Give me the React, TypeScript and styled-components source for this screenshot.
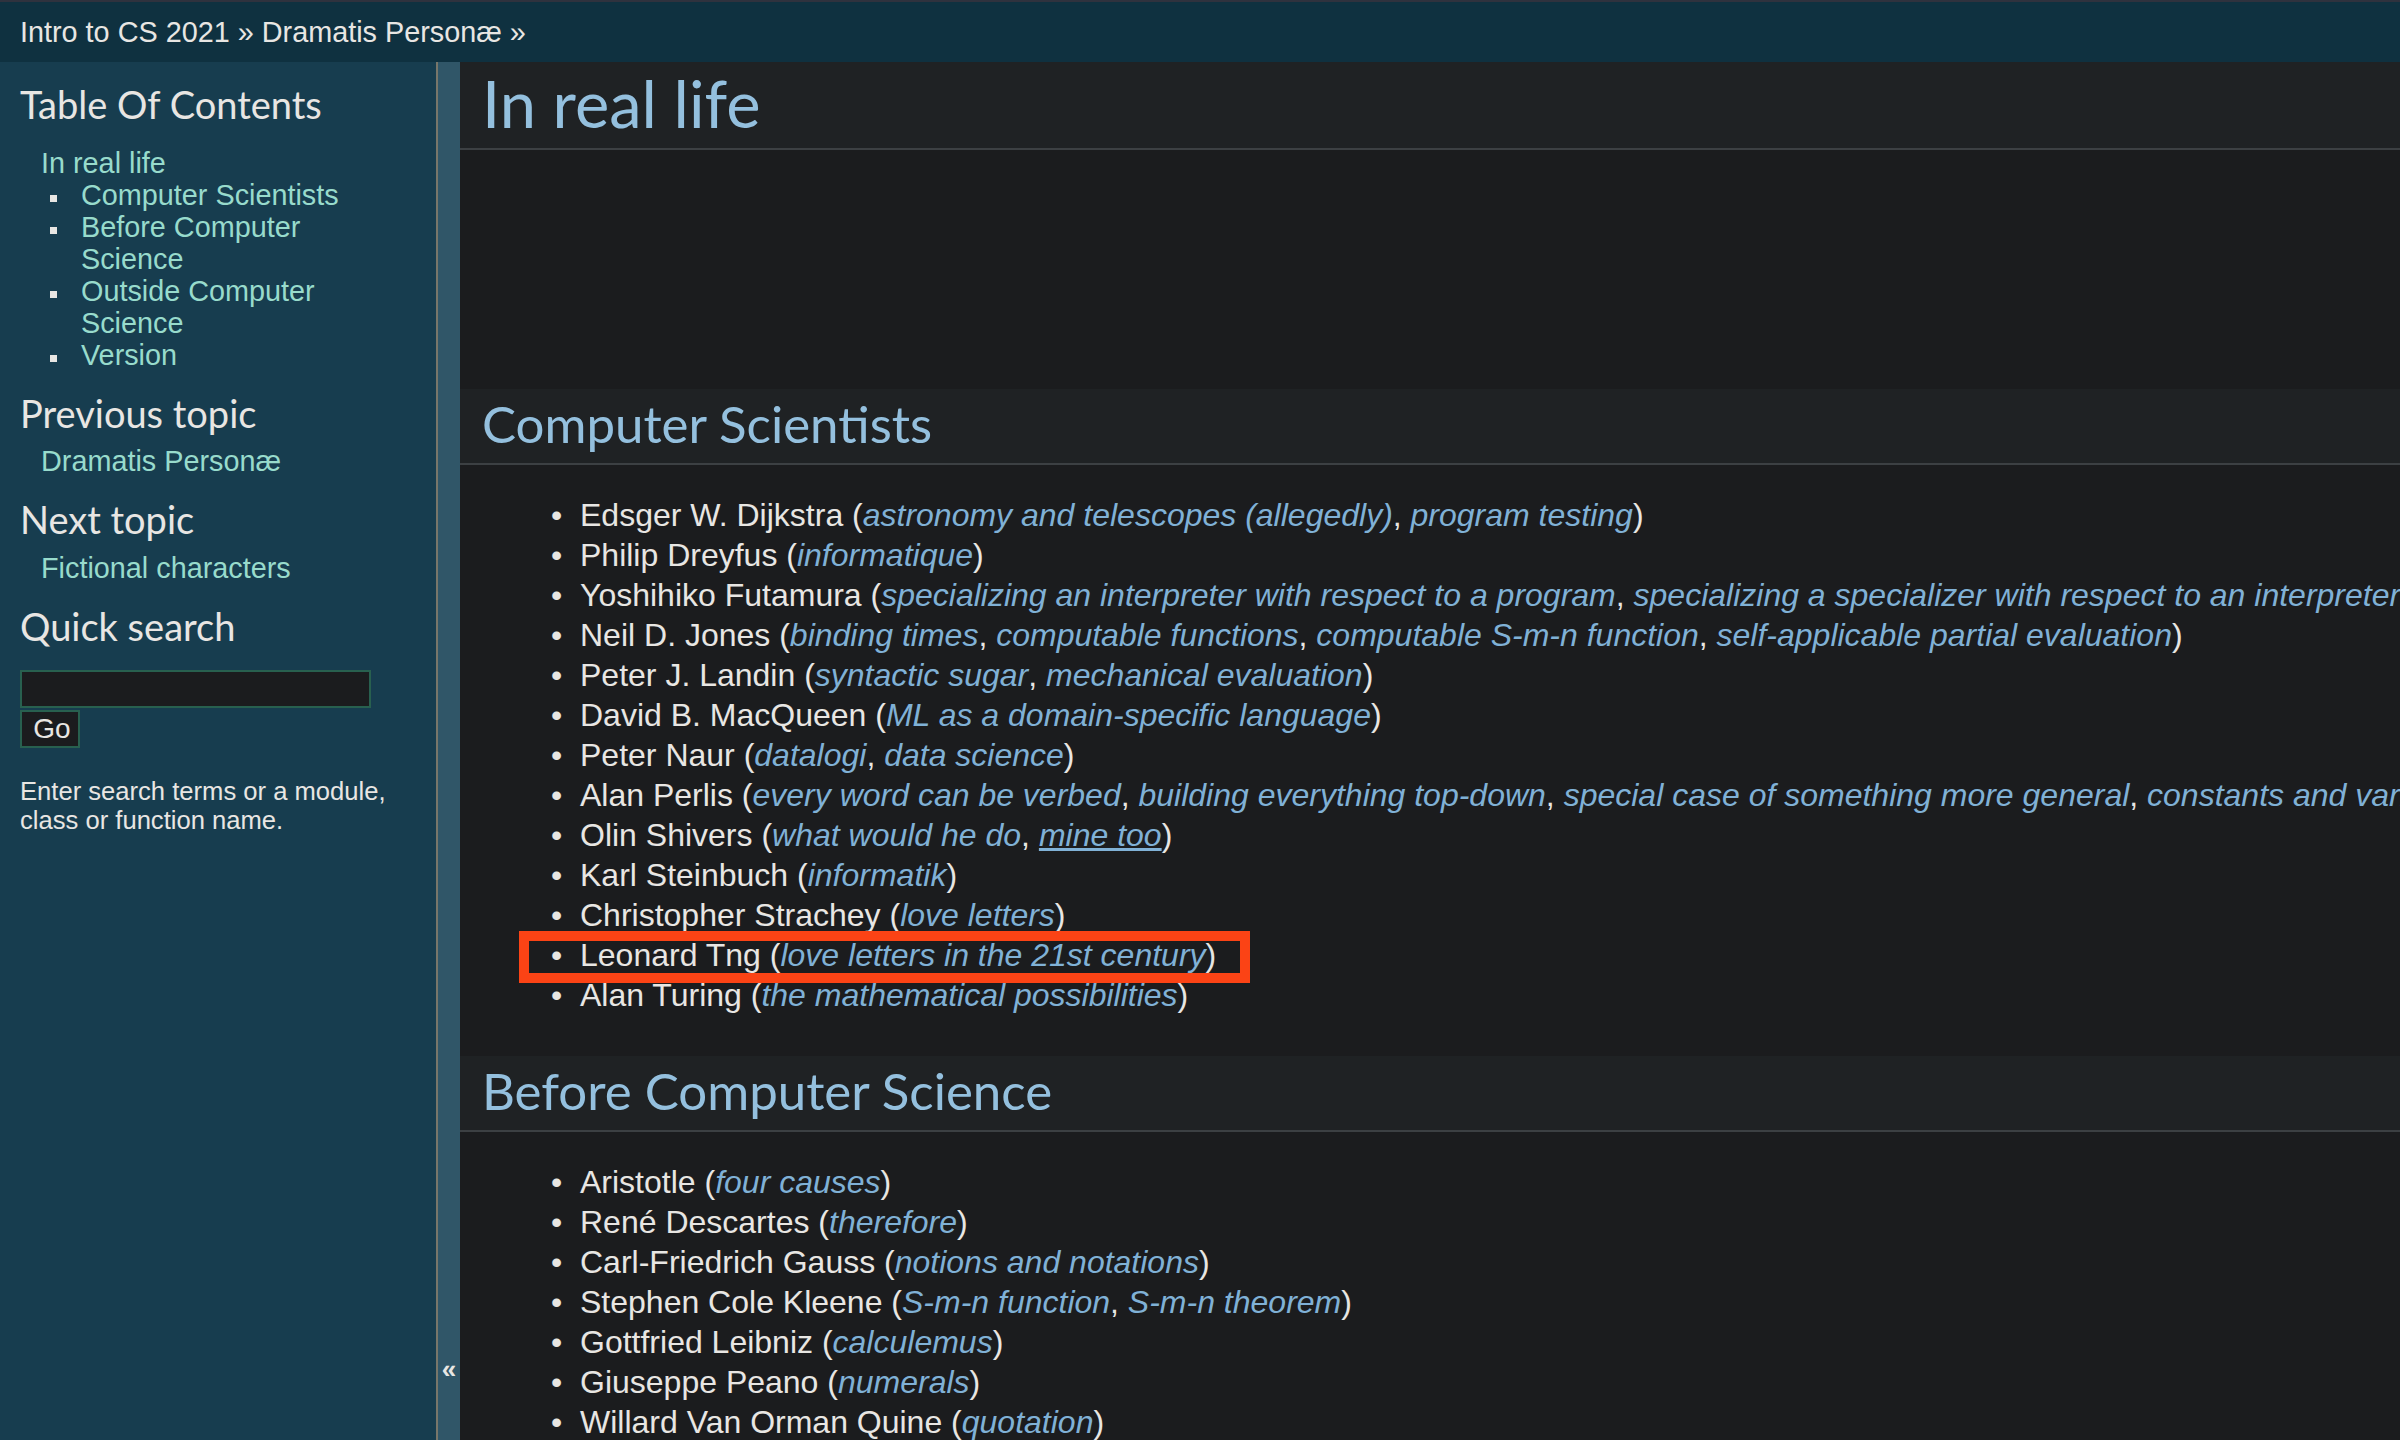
import React from "react";
import styled, { createGlobalStyle } from "styled-components";

interface Person {
  name: string;
  refs: string[];
  hovered?: string;
  marked?: boolean;
}

const scientists: Person[] = [
  { name: "Edsger W. Dijkstra", refs: ["astronomy and telescopes (allegedly)", "program testing"] },
  { name: "Philip Dreyfus", refs: ["informatique"] },
  {
    name: "Yoshihiko Futamura",
    refs: [
      "specializing an interpreter with respect to a program",
      "specializing a specializer with respect to an interpreter",
      "specializing a specializer with respect to itself",
    ],
  },
  {
    name: "Neil D. Jones",
    refs: ["binding times", "computable functions", "computable S-m-n function", "self-applicable partial evaluation"],
  },
  { name: "Peter J. Landin", refs: ["syntactic sugar", "mechanical evaluation"] },
  { name: "David B. MacQueen", refs: ["ML as a domain-specific language"] },
  { name: "Peter Naur", refs: ["datalogi", "data science"] },
  {
    name: "Alan Perlis",
    refs: [
      "every word can be verbed",
      "building everything top-down",
      "special case of something more general",
      "constants and variables",
    ],
  },
  { name: "Olin Shivers", refs: ["what would he do", "mine too"], hovered: "mine too" },
  { name: "Karl Steinbuch", refs: ["informatik"] },
  { name: "Christopher Strachey", refs: ["love letters"] },
  { name: "Leonard Tng", refs: ["love letters in the 21st century"], marked: true },
  { name: "Alan Turing", refs: ["the mathematical possibilities"] },
];

const predecessors: Person[] = [
  { name: "Aristotle", refs: ["four causes"] },
  { name: "René Descartes", refs: ["therefore"] },
  { name: "Carl-Friedrich Gauss", refs: ["notions and notations"] },
  { name: "Stephen Cole Kleene", refs: ["S-m-n function", "S-m-n theorem"] },
  { name: "Gottfried Leibniz", refs: ["calculemus"] },
  { name: "Giuseppe Peano", refs: ["numerals"] },
  { name: "Willard Van Orman Quine", refs: ["quotation"] },
];

const tocChildren = ["Computer Scientists", "Before Computer Science", "Outside Computer Science", "Version"];

const GlobalStyle = createGlobalStyle`
  html, body {
    margin: 0;
    height: 100%;
    overflow: hidden;
    background: #1b1c1e;
  }
  body {
    font-family: "Liberation Sans", Arial, sans-serif;
    color: #e8e6e3;
  }
`;

const Page = styled.div`
  display: flex;
  flex-direction: column;
  height: 100vh;
`;

const Related = styled.div`
  display: flex;
  align-items: center;
  height: 60px;
  border-top: 2px solid #2f323e;
  background: #0f3140;
  padding-left: 20px;
  font-size: 28.8px;
  white-space: nowrap;

  a {
    color: #e8e6e3;
    text-decoration: none;
  }
`;

const Body = styled.div`
  display: flex;
  flex: 1;
  min-height: 0;
`;

const Sidebar = styled.div`
  width: 436px;
  flex-shrink: 0;
  box-sizing: border-box;
  padding: 20px 36px 0 20px;
  background: #173d4f;
`;

const SideHeading = styled.h3`
  margin: 0;
  font-family: Lato, "Open Sans", sans-serif;
  font-weight: normal;
  font-size: 38px;
  line-height: 44px;
  color: #e8e6e3;
`;

const SideList = styled.ul<{ $gap: number }>`
  margin: ${(p) => p.$gap}px 0 20px 21px;
  padding: 0;
  list-style: none;
  font-size: 28.8px;
  line-height: 32px;

  a {
    color: #98dbcc;
    text-decoration: none;
  }
`;

const SubList = styled.ul`
  margin: 0;
  padding-left: 40px;
  list-style: none;

  li {
    position: relative;
  }

  li::before {
    content: "";
    position: absolute;
    left: -31px;
    top: 16px;
    width: 7px;
    height: 7px;
    background: #e8e6e3;
  }
`;

const SearchBox = styled.input`
  display: block;
  box-sizing: border-box;
  width: 351px;
  height: 38px;
  margin: 22px 0 2px;
  background: #1b1c1e;
  border: 2px solid #28604f;
  outline: none;
  color: #e8e6e3;
`;

const GoButton = styled.button`
  display: block;
  box-sizing: border-box;
  width: 60px;
  height: 38px;
  padding: 0 0 0 4px;
  background: #1b1c1e;
  border: 2px solid #28604f;
  color: #e8e6e3;
  font-family: "Liberation Sans", Arial, sans-serif;
  font-size: 28px;
`;

const SearchHint = styled.p`
  margin: 29px 0 0;
  font-size: 25.6px;
  line-height: 29px;
`;

const Divider = styled.div`
  width: 2px;
  flex-shrink: 0;
  background: #78766a;
`;

const CollapseBar = styled.div`
  width: 22px;
  flex-shrink: 0;
  display: flex;
  flex-direction: column;
  justify-content: flex-end;
  align-items: center;
  padding-bottom: 55px;
  box-sizing: border-box;
  background: #305668;
  color: #e8e6e3;
  font-weight: bold;
  font-size: 26px;
`;

const Main = styled.div`
  flex: 1;
  min-width: 0;
  overflow: hidden;
`;

const PageTitle = styled.h1`
  margin: 0 0 239px;
  padding: 3px 0 7px 22px;
  background: #1f2224;
  border-bottom: 2px solid #3c4043;
  font-family: Lato, "Open Sans", sans-serif;
  font-weight: normal;
  font-size: 65px;
  line-height: 76px;
  color: #94c0de;
`;

const SectionTitle = styled.h2`
  margin: 0;
  padding: 4px 0 8px 22px;
  background: #1f2224;
  border-bottom: 2px solid #3c4043;
  font-family: Lato, "Open Sans", sans-serif;
  font-weight: normal;
  font-size: 51px;
  line-height: 62px;
  color: #94c0de;
`;

const PeopleList = styled.ul`
  margin: 30px 0 41px;
  padding-left: 120px;
  font-size: 32px;
  line-height: 40px;
  white-space: nowrap;

  li::marker {
    content: "\\2022\\00a0\\00a0";
  }
`;

const Entry = styled.span<{ $marked?: boolean }>`
  position: relative;

  &::after {
    content: "";
    display: ${(p) => (p.$marked ? "block" : "none")};
    position: absolute;
    top: -6px;
    bottom: -10px;
    left: -61px;
    right: -34px;
    border: 10px solid #fb4315;
    pointer-events: none;
  }
`;

const Ref = styled.a<{ $hover?: boolean }>`
  font-style: italic;
  color: #80b1d6;
  text-decoration: ${(p) => (p.$hover ? "underline" : "none")};
`;

const PersonList = ({ people }: { people: Person[] }) => (
  <PeopleList>
    {people.map((p) => (
      <li key={p.name}>
        <Entry $marked={p.marked}>
          {p.name} (
          {p.refs.map((r, i) => (
            <React.Fragment key={r}>
              {i > 0 && ", "}
              <Ref href="#" $hover={p.hovered === r}>
                {r}
              </Ref>
            </React.Fragment>
          ))}
          )
        </Entry>
      </li>
    ))}
  </PeopleList>
);

const App = () => {
  return (
    <Page>
      <GlobalStyle />
      <Related>
        <a href="#">Intro to CS 2021</a>&nbsp;»&nbsp;<a href="#">Dramatis Personæ</a>&nbsp;»
      </Related>
      <Body>
        <Sidebar>
          <SideHeading>Table Of Contents</SideHeading>
          <SideList $gap={21}>
            <li>
              <a href="#">In real life</a>
              <SubList>
                {tocChildren.map((t) => (
                  <li key={t}>
                    <a href="#">{t}</a>
                  </li>
                ))}
              </SubList>
            </li>
          </SideList>
          <SideHeading>Previous topic</SideHeading>
          <SideList $gap={10}>
            <li>
              <a href="#">Dramatis Personæ</a>
            </li>
          </SideList>
          <SideHeading>Next topic</SideHeading>
          <SideList $gap={11}>
            <li>
              <a href="#">Fictional characters</a>
            </li>
          </SideList>
          <SideHeading>Quick search</SideHeading>
          <SearchBox type="text" aria-label="search" />
          <GoButton type="button">Go</GoButton>
          <SearchHint>
            Enter search terms or a module,
            <br />
            class or function name.
          </SearchHint>
        </Sidebar>
        <Divider />
        <CollapseBar>«</CollapseBar>
        <Main>
          <PageTitle>In real life</PageTitle>
          <SectionTitle>Computer Scientists</SectionTitle>
          <PersonList people={scientists} />
          <SectionTitle>Before Computer Science</SectionTitle>
          <PersonList people={predecessors} />
        </Main>
      </Body>
    </Page>
  );
};

export default App;
